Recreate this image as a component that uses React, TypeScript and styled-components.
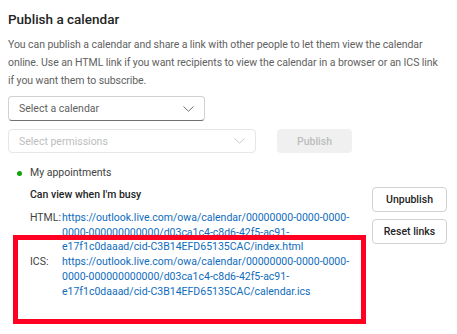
import React from "react";
import styled, { createGlobalStyle } from "styled-components";

const Global = createGlobalStyle`
  html, body { margin: 0; padding: 0; background: #ffffff; }
  body { font-family: Roboto, "Noto Sans", sans-serif; color: #242424; }
`;

const Page = styled.div`
  position: relative;
  width: 457px;
  height: 334px;
  box-sizing: border-box;
  padding: 10px 10px 0 8px;
  overflow: hidden;
`;

const Title = styled.h1`
  margin: 0;
  font-size: 13.5px;
  line-height: 18px;
  font-weight: 500;
  color: #242424;
`;

const Description = styled.p`
  margin: 8px 0 0 0;
  font-size: 10.5px;
  line-height: 18px;
  letter-spacing: -0.07px;
  color: #616161;
`;

const DescLine = styled.span`
  display: block;
  white-space: nowrap;
`;

const Row = styled.div<{ $top: number }>`
  display: flex;
  align-items: center;
  gap: 21px;
  margin-top: ${(p) => p.$top}px;
`;

const Dropdown = styled.div<{ $width: number; $height: number; $disabled?: boolean }>`
  box-sizing: border-box;
  width: ${(p) => p.$width}px;
  height: ${(p) => p.$height}px;
  display: flex;
  align-items: center;
  justify-content: space-between;
  padding: 0 10px 0 10px;
  border: 1px solid ${(p) => (p.$disabled ? "#e6e6e6" : "#d1d1d1")};
  border-bottom-color: ${(p) => (p.$disabled ? "#e6e6e6" : "#707070")};
  border-radius: 4px;
  font-size: 10.5px;
  color: ${(p) => (p.$disabled ? "#bdbdbd" : "#616161")};
`;

const PrimaryButton = styled.div`
  box-sizing: border-box;
  width: 75px;
  height: 24px;
  display: flex;
  align-items: center;
  justify-content: center;
  border-radius: 4px;
  background: #f0f0f0;
  color: #bdbdbd;
  font-size: 10.5px;
  font-weight: 500;
`;

const CalendarItem = styled.div`
  display: flex;
  align-items: center;
  margin: 12px 0 0 9px;
  font-size: 10.5px;
  line-height: 16px;
  color: #424242;
`;

const Dot = styled.span`
  width: 5px;
  height: 5px;
  border-radius: 50%;
  background: #13a10e;
  margin-right: 8px;
`;

const Details = styled.div`
  display: flex;
  justify-content: space-between;
  margin: 6px 0 0 22px;
`;

const Info = styled.div`
  display: flex;
  flex-direction: column;
`;

const Permission = styled.div`
  font-size: 10.5px;
  line-height: 16px;
  font-weight: 500;
  color: #242424;
`;

const Links = styled.div`
  display: grid;
  grid-template-columns: 32px auto;
  margin-top: 8px;
  font-size: 10.5px;
  line-height: 14.7px;
`;

const Label = styled.span`
  color: #424242;
`;

const Url = styled.a`
  color: #0f6cbd;
  text-decoration: none;
`;

const UrlLine = styled.span`
  display: block;
  white-space: nowrap;
`;

const Actions = styled.div`
  display: flex;
  flex-direction: column;
  gap: 7px;
`;

const SecondaryButton = styled.div`
  box-sizing: border-box;
  width: 75px;
  height: 25px;
  display: flex;
  align-items: center;
  justify-content: center;
  border: 1px solid #d1d1d1;
  border-radius: 4px;
  background: #ffffff;
  color: #242424;
  font-size: 10.5px;
  font-weight: 500;
`;

const Highlight = styled.div`
  position: absolute;
  left: 13px;
  top: 235px;
  width: 353px;
  height: 89px;
  box-sizing: border-box;
  border: 5px solid #ff0022;
  pointer-events: none;
`;

const Chevron = ({ color }: { color: string }) => (
  <svg width="11" height="6" viewBox="0 0 11 6" fill="none">
    <path d="M0.5 0.5 L5.5 5.2 L10.5 0.5" stroke={color} strokeWidth="0.9" />
  </svg>
);

const htmlUrl = [
  "https://outlook.live.com/owa/calendar/00000000-0000-0000-",
  "0000-000000000000/d03ca1c4-c8d6-42f5-ac91-",
  "e17f1c0daaad/cid-C3B14EFD65135CAC/index.html",
];
const icsUrl = [
  "https://outlook.live.com/owa/calendar/00000000-0000-0000-",
  "0000-000000000000/d03ca1c4-c8d6-42f5-ac91-",
  "e17f1c0daaad/cid-C3B14EFD65135CAC/calendar.ics",
];

export default function App() {
  return (
    <>
      <Global />
      <Page>
        <Title>Publish a calendar</Title>
        <Description>
          <DescLine>You can publish a calendar and share a link with other people to let them view the calendar</DescLine>
          <DescLine>online. Use an HTML link if you want recipients to view the calendar in a browser or an ICS link</DescLine>
          <DescLine>if you want them to subscribe.</DescLine>
        </Description>
        <Row $top={6}>
          <Dropdown $width={197} $height={25}>
            <span>Select a calendar</span>
            <Chevron color="#616161" />
          </Dropdown>
        </Row>
        <Row $top={8}>
          <Dropdown $width={248} $height={24} $disabled>
            <span>Select permissions</span>
            <Chevron color="#c4c4c4" />
          </Dropdown>
          <PrimaryButton>Publish</PrimaryButton>
        </Row>
        <CalendarItem>
          <Dot />
          My appointments
        </CalendarItem>
        <Details>
          <Info>
            <Permission>Can view when I'm busy</Permission>
            <Links>
              <Label>HTML:</Label>
              <Url>
                {htmlUrl.map((l) => (
                  <UrlLine key={l}>{l}</UrlLine>
                ))}
              </Url>
              <Label>ICS:</Label>
              <Url>
                {icsUrl.map((l) => (
                  <UrlLine key={l}>{l}</UrlLine>
                ))}
              </Url>
            </Links>
          </Info>
          <Actions>
            <SecondaryButton>Unpublish</SecondaryButton>
            <SecondaryButton>Reset links</SecondaryButton>
          </Actions>
        </Details>
        <Highlight />
      </Page>
    </>
  );
}
